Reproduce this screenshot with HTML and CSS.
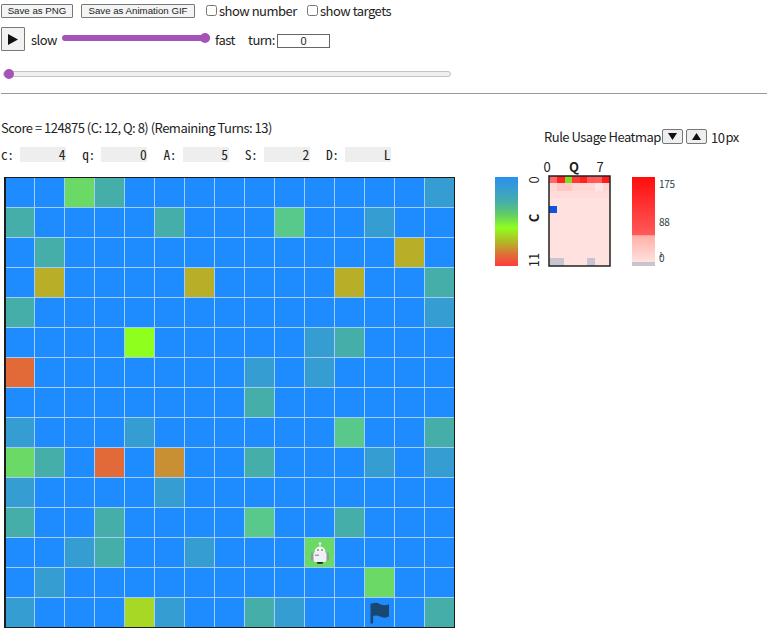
FILE: index.html
```html
<!DOCTYPE html>
<html lang="en">
<head>
<meta charset="utf-8">
<title>Visualizer</title>
<link rel="stylesheet" href="styles.css">
</head>
<body>
<div class="toolbar">
  <button class="btn-save">Save as PNG</button>
  <button class="btn-save btn-gif">Save as Animation GIF</button>
  <label class="check check-num"><input type="checkbox">show number</label>
  <label class="check check-tgt"><input type="checkbox">show targets</label>
</div>
<div class="playbar">
  <button class="btn-play"><svg width="10" height="11" viewBox="0 0 10 11"><path d="M0 0L10 5.5L0 11Z" fill="#111"/></svg></button>
  <span class="slow">slow</span>
  <input class="range range-speed" type="range" min="0" max="100" value="100">
  <span class="fast">fast</span>
  <span class="turn">turn:</span>
  <input class="turn-input" type="text" value="0">
</div>
<div class="seekbar"><input class="range range-seek" type="range" min="0" max="100" value="0"></div>
<hr class="rule">
<div class="main">
  <div class="left">
    <div class="score">Score = 124875 (C: 12, Q: 8) (Remaining Turns: 13)</div>
    <div class="state">
      <span class="st"><span class="st-k">c:</span><span class="st-v">4</span></span>
      <span class="st"><span class="st-k">q:</span><span class="st-v">0</span></span>
      <span class="st"><span class="st-k">A:</span><span class="st-v">5</span></span>
      <span class="st"><span class="st-k">S:</span><span class="st-v">2</span></span>
      <span class="st"><span class="st-k">D:</span><span class="st-v">L</span></span>
    </div>
    <div class="board">
      <i></i><i></i><i class="g"></i><i class="t"></i><i></i><i></i><i></i><i></i><i></i><i></i><i></i><i></i><i></i><i></i><i class="b"></i>
      <i class="t"></i><i></i><i></i><i></i><i></i><i class="t"></i><i></i><i></i><i></i><i class="m"></i><i></i><i></i><i class="b"></i><i></i><i></i>
      <i></i><i class="t"></i><i></i><i></i><i></i><i></i><i></i><i></i><i></i><i></i><i></i><i></i><i></i><i class="o"></i><i></i>
      <i></i><i class="o"></i><i></i><i></i><i></i><i></i><i class="o"></i><i></i><i></i><i></i><i></i><i class="o"></i><i></i><i></i><i class="t"></i>
      <i class="t"></i><i></i><i></i><i></i><i></i><i></i><i></i><i></i><i></i><i></i><i></i><i></i><i></i><i></i><i class="b"></i>
      <i></i><i></i><i></i><i></i><i class="l"></i><i></i><i></i><i></i><i></i><i></i><i class="b"></i><i class="t"></i><i></i><i></i><i></i>
      <i class="r"></i><i></i><i></i><i></i><i></i><i></i><i></i><i></i><i class="b"></i><i></i><i class="b"></i><i></i><i></i><i></i><i></i>
      <i></i><i></i><i></i><i></i><i></i><i></i><i></i><i></i><i class="t"></i><i></i><i></i><i></i><i></i><i></i><i></i>
      <i class="b"></i><i></i><i></i><i></i><i class="b"></i><i></i><i></i><i></i><i></i><i></i><i></i><i class="m"></i><i></i><i></i><i class="t"></i>
      <i class="g"></i><i class="t"></i><i></i><i class="r"></i><i></i><i class="a"></i><i></i><i></i><i class="t"></i><i></i><i></i><i></i><i class="b"></i><i></i><i class="b"></i>
      <i class="b"></i><i></i><i></i><i></i><i></i><i class="b"></i><i></i><i></i><i></i><i></i><i></i><i></i><i></i><i></i><i></i>
      <i class="t"></i><i></i><i></i><i class="t"></i><i></i><i></i><i></i><i></i><i class="m"></i><i></i><i></i><i class="t"></i><i></i><i></i><i></i>
      <i></i><i></i><i class="b"></i><i class="t"></i><i></i><i></i><i class="b"></i><i></i><i></i><i></i><i class="g"><svg class="robot" width="20" height="24" viewBox="0 0 20 24"><circle cx="10" cy="2.5" r="1.3" fill="#eef2f0"/><rect x="9.4" y="3" width="1.2" height="3" fill="#dfe5e2"/><path d="M4.5 11a5.5 5.5 0 0 1 11 0Z" fill="#f2f4f3"/><rect x="1" y="11.5" width="3" height="8" rx="1" fill="#8f9a96"/><rect x="16" y="11.5" width="3" height="8" rx="1" fill="#8f9a96"/><rect x="3.5" y="11" width="13" height="10" rx="2" fill="#f1f1f4"/><circle cx="8" cy="9" r=".8" fill="#445"/><circle cx="12" cy="9" r=".8" fill="#445"/><rect x="5" y="13.5" width="4" height="1.5" fill="#9aa3a3"/><rect x="7" y="21" width="6" height="1.8" rx=".9" fill="#222"/></svg></i><i></i><i></i><i></i><i></i>
      <i></i><i class="b"></i><i></i><i></i><i></i><i></i><i></i><i></i><i></i><i></i><i></i><i></i><i class="g"></i><i></i><i></i>
      <i class="b"></i><i></i><i></i><i></i><i class="y"></i><i class="b"></i><i></i><i></i><i class="t"></i><i class="b"></i><i></i><i></i><i><svg class="flag" width="20" height="22" viewBox="0 0 20 22"><path d="M1.8 2.5V20.5" stroke="#19476f" stroke-width="2.6" stroke-linecap="round" fill="none"/><path d="M2 2C5 0 8 1 10 2.2C13 3.6 16 3.4 19 2.2V14.5C16 16 13 16 10 14.6C8 13.4 5 13 2 14.5Z" fill="#19476f"/></svg></i><i></i><i class="t"></i>
    </div>
  </div>
  <div class="right">
    <div class="heat-head">
      <span class="heat-title">Rule Usage Heatmap</span>
      <button class="btn-size"><svg width="9" height="7" viewBox="0 0 9 7"><path d="M0 0H9L4.5 7Z" fill="#111"/></svg></button>
      <button class="btn-size"><svg width="9" height="7" viewBox="0 0 9 7"><path d="M0 7H9L4.5 0Z" fill="#111"/></svg></button>
      <span class="heat-px"><span class="heat-num">10</span>px</span>
    </div>
    <div class="heat-body">
      <div class="legend legend-cell"></div>
      <svg class="heat-svg" width="114" height="114" viewBox="0 -4 114 114">
        <g class="heat-labels">
          <text x="29" y="11" text-anchor="middle">0</text>
          <text x="82" y="11" text-anchor="middle">7</text>
          <text x="56" y="11" text-anchor="middle" class="bold">Q</text>
          <text transform="translate(21 19) rotate(-90)" text-anchor="middle">0</text>
          <text transform="translate(21 57) rotate(-90)" text-anchor="middle" class="bold">C</text>
          <text transform="translate(21 99) rotate(-90)" text-anchor="middle">11</text>
        </g>
        <rect x="31" y="15" width="61" height="90" fill="#ffe2df"/>
        <g shape-rendering="crispEdges">
          <rect x="31" y="15" width="8" height="7" fill="#ff6868"/><rect x="39" y="15" width="8" height="7" fill="#ff2222"/><rect x="47" y="15" width="7" height="7" fill="#7fdc22"/><rect x="54" y="15" width="8" height="7" fill="#ff3a3a"/><rect x="62" y="15" width="7" height="7" fill="#ff2222"/><rect x="69" y="15" width="8" height="7" fill="#ff5858"/><rect x="77" y="15" width="7" height="7" fill="#ff5c5c"/><rect x="84" y="15" width="8" height="7" fill="#ff1c1c"/>
          <rect x="31" y="22" width="61" height="8" fill="#ffd6d2"/><rect x="39" y="22" width="15" height="8" fill="#ffc8c4"/><rect x="77" y="22" width="8" height="8" fill="#ffe6e4"/>
          <rect x="31" y="30" width="61" height="7" fill="#ffdcd9"/>
          <rect x="31" y="45" width="8" height="7" fill="#1252e0"/>
          <rect x="31" y="97" width="15" height="8" fill="#c9c5d0"/><rect x="69" y="97" width="8" height="8" fill="#c9c5d0"/>
        </g>
        <rect x="31" y="15" width="61" height="90" fill="none" stroke="#222" stroke-width="1.5"/>
      </svg>
      <div class="legend legend-use"></div>
      <div class="legend-labels">
        <span>175</span>
        <span>88</span>
        <span>0</span>
        <span class="legend-tick">1</span>
      </div>
    </div>
  </div>
</div>
</body>
</html>
```
FILE: styles.css
```css
* { box-sizing: border-box; }
html, body { margin: 0; padding: 0; background: #fff; }
body {
  width: 772px;
  height: 633px;
  overflow: hidden;
  font-family: "Noto Sans CJK JP", "Noto Sans", sans-serif;
  font-size: 13px;
  letter-spacing: -0.5px;
  color: #222;
}
.toolbar {
  display: flex;
  align-items: center;
  height: 18px;
  margin-top: 2px;
  padding-left: 1px;
}
.btn-save {
  height: 14px;
  width: 72px;
  padding: 0;
  margin-right: 8px;
  font-family: "Liberation Sans", Arial, sans-serif;
  font-size: 9.7px;
  letter-spacing: 0;
  line-height: 12px;
  color: #222;
  background: #f4f4f4;
  border: 1px solid #777;
  border-radius: 1px;
}
.btn-gif { width: 114px; margin-right: 11px; }
.check {
  display: flex;
  align-items: center;
  line-height: 18px;
  white-space: nowrap;
}
.check input {
  width: 11px;
  height: 11px;
  margin: 0 2px 2px 0;
}
.check-num { width: 101px; }
.playbar {
  display: flex;
  align-items: center;
  height: 24px;
  margin-top: 7px;
  padding-left: 1px;
}
.btn-play {
  display: flex;
  align-items: center;
  justify-content: center;
  width: 24px;
  height: 24px;
  padding: 0;
  background: #f2f2f2;
  border: 1px solid #777;
  border-radius: 1px;
}
.slow { width: 26px; margin-left: 6px; white-space: nowrap; }
.range {
  appearance: none;
  -webkit-appearance: none;
  display: block;
  margin: 0;
  height: 10px;
  background: transparent;
}
.range::-webkit-slider-runnable-track {
  -webkit-appearance: none;
  height: 6px;
  border-radius: 3px;
}
.range::-webkit-slider-thumb {
  -webkit-appearance: none;
  width: 10px;
  height: 10px;
  margin-top: -2px;
  border-radius: 50%;
  background: #a553b8;
}
.range-speed { width: 148px; margin: -3px 0 0 5px; }
.range-speed::-webkit-slider-runnable-track { background: #a553b8; }
.fast { width: 20px; margin-left: 5px; white-space: nowrap; }
.turn { width: 26px; margin-left: 13px; white-space: nowrap; }
.turn-input {
  width: 53px;
  height: 14px;
  margin: 4px 0 0 3px;
  padding: 0;
  font-family: "Liberation Sans", Arial, sans-serif;
  font-size: 11px;
  letter-spacing: 0;
  text-align: center;
  color: #222;
  background: #fff;
  border: 1px solid #666;
  border-radius: 0;
}
.seekbar { margin-top: 18px; padding-left: 3px; }
.range-seek { width: 448px; }
.range-seek::-webkit-slider-runnable-track { background: #efefef; border: 1px solid #c4c4c4; }
.range-seek::-webkit-slider-thumb { margin-top: -3px; }
.rule {
  width: 766px;
  height: 1px;
  margin: 14px 0 0 1px;
  background: #999;
  border: 0;
}
.main { display: flex; }
.left { width: 495px; padding-top: 24px; }
.score { padding-left: 1px; line-height: 20px; white-space: nowrap; }
.state {
  display: flex;
  margin-top: 9px;
  padding-left: 1px;
  height: 15px;
  font-family: "Noto Sans Mono CJK JP", "DejaVu Sans Mono", monospace;
  font-size: 13.5px;
  letter-spacing: -0.4px;
  line-height: 15px;
}
.st { display: flex; width: 81.25px; }
.st-k { width: 19px; }
.st-v {
  width: 46px;
  padding-right: 1px;
  text-align: right;
  background: #eee;
}
.board {
  display: grid;
  grid-template-columns: 28px repeat(14, 29px);
  grid-auto-rows: 29px;
  gap: 1px;
  width: 451px;
  height: 451px;
  margin: 15px 0 0 4px;
  background: #a3cef9;
  border-style: solid;
  border-color: #1c1c1c;
  border-width: 1px 1px 1px 2px;
}
.board i {
  display: flex;
  align-items: center;
  justify-content: center;
  background: #1e8cff;
}
.board i.g { background: #6bd966; }
.board i.t { background: #46aea8; }
.board i.b { background: #369dd2; }
.board i.m { background: #58c98a; }
.board i.o { background: #b8ae28; }
.board i.l { background: #8fff1e; }
.board i.r { background: #e26a38; }
.board i.a { background: #c89032; }
.board i.y { background: #a8d826; }
.right { width: 277px; }
.heat-head {
  display: flex;
  align-items: center;
  height: 18px;
  margin-top: 33px;
  padding-left: 49px;
}
.heat-title { width: 118px; white-space: nowrap; }
.btn-size {
  display: flex;
  align-items: center;
  justify-content: center;
  width: 21px;
  height: 15px;
  margin-right: 3px;
  padding: 0;
  background: #eee;
  border: 1px solid #777;
  border-radius: 2px;
}
.heat-px { margin-left: 1px; }
.heat-num { margin-right: 1px; position: relative; top: 1px; }
.heat-body {
  display: flex;
  align-items: flex-start;
  height: 130px;
}
.legend { width: 23px; height: 89px; margin-top: 32px; }
.legend-cell {
  background: linear-gradient(#2a8ff0, #46aea8 28%, #62cc66 42%, #8fff1e 57%, #b8ae28 75%, #e26a38 88%, #ff3c3c);
}
.heat-svg { margin-top: 12px; }
.heat-labels text { font-size: 13px; fill: #222; letter-spacing: 0; }
.heat-labels .bold { font-weight: 700; font-size: 13px; }
.legend-use {
  background: linear-gradient(#ff0c0c, #ff5a5a 65%, #ffb0a6 66%, #ffe2e0 96%, #c9c4cc 96%);
}
.legend-labels {
  position: relative;
  display: flex;
  flex-direction: column;
  margin: 32px 0 0 4px;
  font-size: 10px;
  letter-spacing: -0.3px;
  line-height: 14px;
  color: #2f3f45;
}
.legend-labels span:nth-child(2) { margin-top: 24px; }
.legend-labels span:nth-child(3) { margin-top: 22px; }
.legend-labels .legend-tick {
  position: absolute;
  left: 0;
  top: 70px;
  font-size: 7px;
}
```
